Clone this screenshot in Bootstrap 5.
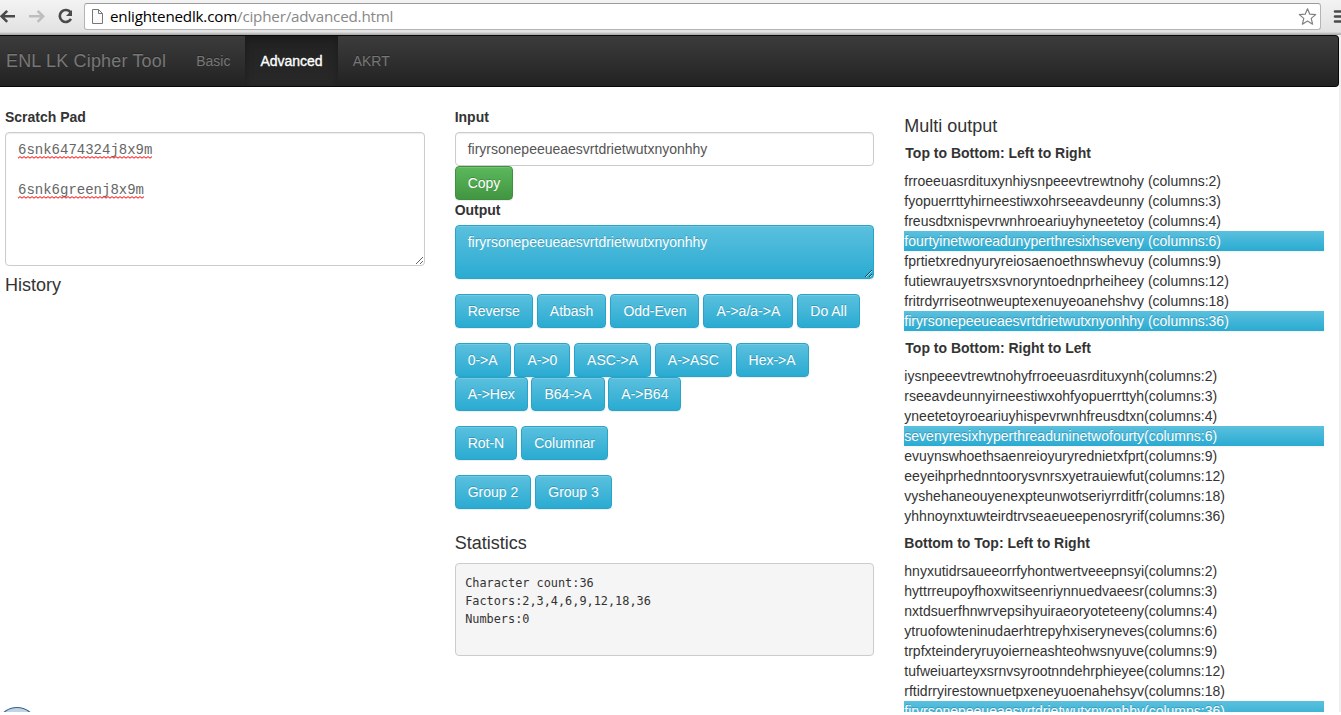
<!DOCTYPE html>
<html lang="en">
<head>
<meta charset="utf-8">
<title>ENL LK Cipher Tool</title>
<link href="https://cdn.jsdelivr.net/npm/bootstrap@5.3.0/dist/css/bootstrap.min.css" rel="stylesheet">
<style>
  body { font-family: "Liberation Sans", Arial, sans-serif; font-size: 14px; line-height: 20px; color: #333; background: #fff; overflow: hidden; }
  .window { height: 712px; position: relative; }
  .toolbar { height: 35px; background: linear-gradient(#f3f3f3, #e2e2e2 32px, #c8c8c8 33px, #a5a5a5); }
  .toolbar svg { display: block; flex: none; }
  .omnibox { width: 1237px; height: 27px; margin: 3px 0 0 12px; border: 1px solid #b4b4b4; border-top-color: #9c9c9c; border-radius: 3px; background: #fff; }
  .url { font: 15.2px/24px "Open Sans", sans-serif; letter-spacing: -.2px; color: #888; white-space: nowrap; }
  .url b { font-weight: 400; color: #000; }
  .viewport { height: 677px; padding-right: 2px; background: linear-gradient(#f0f0f0, #f0f0f0) right / 2px 100% no-repeat; }
  .topbar { height: 52px; padding: 0; border: 1px solid #080808; border-left: 0; border-radius: 0 4px 4px 0; background: linear-gradient(#3c3c3c, #222); text-shadow: 0 -1px 0 rgba(0,0,0,.25); align-items: stretch; justify-content: flex-start; }
  .topbar .navbar-brand { font-size: 18px; line-height: 20px; letter-spacing: .17px; color: #777; padding: 15px 15px 15px 6px; margin: 0; }
  .topbar .navbar-nav .nav-link { color: #777; padding: 15px; line-height: 20px; }
  .topbar .navbar-nav .nav-link.active { color: #fff; background: linear-gradient(#222, #282828); box-shadow: inset 0 3px 9px rgba(0,0,0,.25); -webkit-text-stroke: .35px #fff; }
  .work { padding: 20px 15px 0 5px; }
  .work > .row { --bs-gutter-x: 30px; }
  .fld { display: block; font-weight: 700; margin-bottom: 5px; }
  .form-control { font-size: 14px; line-height: 20px; padding: 6px 12px; color: #555; border: 1px solid #ccc; border-radius: 4px; box-shadow: inset 0 1px 1px rgba(0,0,0,.075); }
  .scratch { height: 134px; padding-top: 7px; resize: both; overflow: hidden; font-family: "Liberation Mono", monospace; color: #666; }
  .scratch span { padding-bottom: 1px; background: url("data:image/svg+xml,%3Csvg xmlns='http://www.w3.org/2000/svg' width='4' height='3'%3E%3Cpath d='M0 2.2L2 .6L4 2.2' fill='none' stroke='red' stroke-width='1'/%3E%3C/svg%3E") left bottom repeat-x; }
  .blue { color: #fff; background: linear-gradient(#5bc0de, #2aabd2); text-shadow: 0 -1px 0 rgba(0,0,0,.2); }
  .form-control.blue { height: 54px; resize: both; overflow: hidden; border-color: #28a4c9; box-shadow: inset 0 1px 0 rgba(255,255,255,.15), 0 1px 1px rgba(0,0,0,.075); color: #fff; }
  .btn { font-size: 14px; line-height: 20px; padding: 6px 12px; border-radius: 4px; box-shadow: inset 0 1px 0 rgba(255,255,255,.15), 0 1px 1px rgba(0,0,0,.075); color: #fff; white-space: nowrap; }
  .btn.blue { border-color: #28a4c9; }
  .btn.green { background: linear-gradient(#5cb85c, #419641); border-color: #3e8f3e; text-shadow: 0 -1px 0 rgba(0,0,0,.2); width: 58px; }
  .keys { column-gap: 4px; margin-top: 15px; }
  .keys.codes { column-gap: 3.75px; }
  h4 { font-size: 18px; line-height: 20px; font-weight: 400; margin: 0; }
  h4.drop { margin-top: 9px; }
  .stats { font: 11.87px/18px "DejaVu Sans Mono", monospace; height: 93px; margin: 10px 0 0; padding: 9.5px; background: #f5f5f5; border: 1px solid #ccc; border-radius: 4px; overflow: hidden; }
  h5 { font-size: 14px; line-height: 20px; font-weight: 700; margin: 7px 0 8px 1px; }
  .outs { margin: 0; }
  .outs .blue { box-shadow: 0 1px 2px rgba(0,0,0,.06); }
  .bubble { position: absolute; left: 0; bottom: 0; }
</style>
</head>
<body>
<div class="window overflow-hidden">
  <header class="toolbar d-flex align-items-start">
    <svg width="72" height="33" viewBox="0 0 72 33" fill="none">
      <path d="M15 16.3H3M7.2 10.8L1.6 16.3l5.6 5.5" stroke="#4a4a4a" stroke-width="2.5"/>
      <path d="M29 16.3h12M37.6 10.8l5.6 5.5-5.6 5.5" stroke="#bdbdbd" stroke-width="2.5"/>
      <path d="M70.6 12.4A6 6 0 1 0 71 19" stroke="#4a4a4a" stroke-width="2.6"/>
      <path d="M73 9v7h-7z" fill="#4a4a4a"/>
    </svg>
    <div class="omnibox d-flex justify-content-between">
      <div class="d-flex">
        <svg width="25" height="25" viewBox="0 0 25 25"><path d="M7.5 5.5h6l4 4v10h-10z" fill="#fafafa" stroke="#777"/><path d="M13.5 5.5v4h4" fill="none" stroke="#777"/></svg>
        <div class="url"><b>enlightenedlk.com</b>/cipher/advanced.html</div>
      </div>
      <svg width="24" height="25" viewBox="0 0 24 25"><path d="M11.5 4.8l2.3 5.4 5.9.4-4.5 3.8 1.4 5.8-5.1-3.2-5.1 3.2 1.4-5.8-4.5-3.8 5.9-.4z" fill="#fff" stroke="#808080" stroke-width="1.2" stroke-linejoin="round"/></svg>
    </div>
    <svg width="20" height="33" viewBox="0 0 20 33"><path d="M14 11.5h8M14 16.5h8M14 21.5h8" stroke="#4a4a4a" stroke-width="2.6" stroke-linecap="round"/></svg>
  </header>
  <div class="viewport">
    <nav class="navbar navbar-expand topbar">
      <a class="navbar-brand">ENL LK Cipher Tool</a>
      <div class="navbar-nav">
        <a class="nav-link">Basic</a>
        <a class="nav-link active">Advanced</a>
        <a class="nav-link">AKRT</a>
      </div>
    </nav>
    <main class="container-fluid work">
      <div class="row">
        <section class="col-4">
          <div class="fld">Scratch Pad</div>
          <div class="form-control scratch"><span>6snk6474324j8x9m</span><br><br><span>6snk6greenj8x9m</span></div>
          <h4 class="drop">History</h4>
        </section>
        <section class="col-4">
          <div class="fld">Input</div>
          <div class="form-control">firyrsonepeeueaesvrtdrietwutxnyonhhy</div>
          <button class="btn green d-block">Copy</button>
          <div class="fld">Output</div>
          <div class="form-control blue">firyrsonepeeueaesvrtdrietwutxnyonhhy</div>
          <div class="keys d-flex flex-wrap"><button class="btn blue">Reverse</button><button class="btn blue">Atbash</button><button class="btn blue">Odd-Even</button><button class="btn blue">A-&gt;a/a-&gt;A</button><button class="btn blue">Do All</button></div>
          <div class="keys codes d-flex flex-wrap"><button class="btn blue">0-&gt;A</button><button class="btn blue">A-&gt;0</button><button class="btn blue">ASC-&gt;A</button><button class="btn blue">A-&gt;ASC</button><button class="btn blue">Hex-&gt;A</button><button class="btn blue">A-&gt;Hex</button><button class="btn blue">B64-&gt;A</button><button class="btn blue">A-&gt;B64</button></div>
          <div class="keys d-flex flex-wrap"><button class="btn blue">Rot-N</button><button class="btn blue">Columnar</button></div>
          <div class="keys d-flex flex-wrap"><button class="btn blue">Group 2</button><button class="btn blue">Group 3</button></div>
          <h4 class="mt-4">Statistics</h4>
          <pre class="stats">Character count:36
Factors:2,3,4,6,9,12,18,36
Numbers:0</pre>
        </section>
        <section class="col-4">
          <h4 class="drop">Multi output</h4>
          <h5>Top to Bottom: Left to Right</h5>
          <ul class="list-unstyled outs">
            <li>frroeeuasrdituxynhiysnpeeevtrewtnohy (columns:2)</li>
            <li>fyopuerrttyhirneestiwxohrseeavdeunny (columns:3)</li>
            <li>freusdtxnispevrwnhroeariuyhyneetetoy (columns:4)</li>
            <li class="blue">fourtyinetworeadunyperthresixhseveny (columns:6)</li>
            <li>fprtietxrednyuryreiosaenoethnswhevuy (columns:9)</li>
            <li>futiewrauyetrsxsvnoryntoednprheiheey (columns:12)</li>
            <li>fritrdyrriseotnweuptexenuyeoanehshvy (columns:18)</li>
            <li class="blue">firyrsonepeeueaesvrtdrietwutxnyonhhy (columns:36)</li>
          </ul>
          <h5>Top to Bottom: Right to Left</h5>
          <ul class="list-unstyled outs">
            <li>iysnpeeevtrewtnohyfrroeeuasrdituxynh(columns:2)</li>
            <li>rseeavdeunnyirneestiwxohfyopuerrttyh(columns:3)</li>
            <li>yneetetoyroeariuyhispevrwnhfreusdtxn(columns:4)</li>
            <li class="blue">sevenyresixhyperthreaduninetwofourty(columns:6)</li>
            <li>evuynswhoethsaenreioyuryrednietxfprt(columns:9)</li>
            <li>eeyeihprhednntoorysvnrsxyetrauiewfut(columns:12)</li>
            <li>vyshehaneouyenexpteunwotseriyrrditfr(columns:18)</li>
            <li>yhhnoynxtuwteirdtrvseaeueepenosryrif(columns:36)</li>
          </ul>
          <h5 class="ms-0">Bottom to Top: Left to Right</h5>
          <ul class="list-unstyled outs">
            <li>hnyxutidrsaueeorrfyhontwertveeepnsyi(columns:2)</li>
            <li>hyttrreupoyfhoxwitseenriynnuedvaeesr(columns:3)</li>
            <li>nxtdsuerfhnwrvepsihyuiraeoryoteteeny(columns:4)</li>
            <li>ytruofowteninudaerhtrepyhxiseryneves(columns:6)</li>
            <li>trpfxteinderyruyoierneashteohwsnyuve(columns:9)</li>
            <li>tufweiuarteyxsrnvsyrootnndehrphieyee(columns:12)</li>
            <li>rftidrryirestownuetpxeneyuoenahehsyv(columns:18)</li>
            <li class="blue">firyrsonepeeueaesvrtdrietwutxnyonhhy(columns:36)</li>
          </ul>
        </section>
      </div>
    </main>
  </div>
  <svg class="bubble" width="36" height="6" viewBox="0 0 36 6"><ellipse cx="17" cy="14" rx="16.5" ry="12.5" fill="#c3d3e2" stroke="#2f6595" stroke-width="1.2"/></svg>
</div>
<script src="https://cdn.jsdelivr.net/npm/bootstrap@5.3.0/dist/js/bootstrap.bundle.min.js"></script>
</body>
</html>
